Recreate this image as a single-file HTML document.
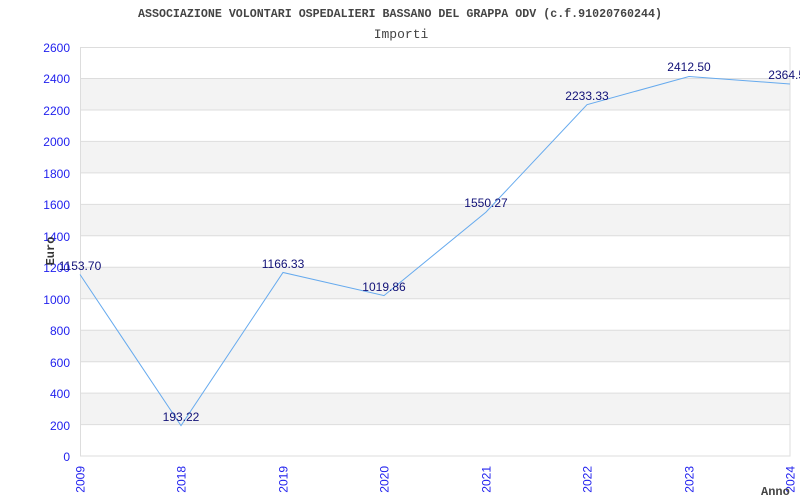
<!DOCTYPE html>
<html><head><meta charset="utf-8"><style>body{margin:0;background:#fff}svg{display:block}</style></head>
<body>
<svg width="800" height="500" xmlns="http://www.w3.org/2000/svg" font-family="Liberation Sans, sans-serif">
<rect width="800" height="500" fill="#fff"/>
<g fill="#f3f3f3">
<rect x="80" y="78.5" width="710" height="31.5"/>
<rect x="80" y="141.4" width="710" height="31.5"/>
<rect x="80" y="204.4" width="710" height="31.5"/>
<rect x="80" y="267.3" width="710" height="31.5"/>
<rect x="80" y="330.2" width="710" height="31.5"/>
<rect x="80" y="393.1" width="710" height="31.5"/>
</g>
<g stroke="#dddddd" stroke-width="1">
<line x1="80" x2="790" y1="78.5" y2="78.5"/><line x1="80" x2="790" y1="110" y2="110"/>
<line x1="80" x2="790" y1="141.4" y2="141.4"/><line x1="80" x2="790" y1="172.9" y2="172.9"/>
<line x1="80" x2="790" y1="204.4" y2="204.4"/><line x1="80" x2="790" y1="235.8" y2="235.8"/>
<line x1="80" x2="790" y1="267.3" y2="267.3"/><line x1="80" x2="790" y1="298.8" y2="298.8"/>
<line x1="80" x2="790" y1="330.2" y2="330.2"/><line x1="80" x2="790" y1="361.7" y2="361.7"/>
<line x1="80" x2="790" y1="393.1" y2="393.1"/><line x1="80" x2="790" y1="424.6" y2="424.6"/>
<rect x="80.5" y="47.5" width="709.5" height="408.5" fill="none"/>
</g>
<g fill="#2222ee" font-size="12" text-anchor="end">
<text x="70" y="52">2600</text><text x="70" y="83">2400</text><text x="70" y="115">2200</text>
<text x="70" y="146">2000</text><text x="70" y="178">1800</text><text x="70" y="209">1600</text>
<text x="70" y="241">1400</text><text x="70" y="272">1200</text><text x="70" y="304">1000</text>
<text x="70" y="335">800</text><text x="70" y="367">600</text><text x="70" y="398">400</text>
<text x="70" y="430">200</text><text x="70" y="461">0</text>
</g>
<g fill="#2222ee" font-size="12" text-anchor="end">
<text transform="translate(84.5,466) rotate(-90)">2009</text>
<text transform="translate(185.5,466) rotate(-90)">2018</text>
<text transform="translate(287.5,466) rotate(-90)">2019</text>
<text transform="translate(388.5,466) rotate(-90)">2020</text>
<text transform="translate(490.5,466) rotate(-90)">2021</text>
<text transform="translate(591.5,466) rotate(-90)">2022</text>
<text transform="translate(693.5,466) rotate(-90)">2023</text>
<text transform="translate(794.5,466) rotate(-90)">2024</text>
</g>
<polyline fill="none" stroke="#66aaee" stroke-width="1" points="80,274.5 181,425.6 283,272.5 384,295.6 486,212.1 587,104.7 689,76.5 790,84"/>
<g fill="#111177" font-size="12" text-anchor="middle">
<text x="80" y="270">1153.70</text><text x="181" y="421">193.22</text>
<text x="283" y="268">1166.33</text><text x="384" y="291">1019.86</text>
<text x="486" y="207">1550.27</text><text x="587" y="100">2233.33</text>
<text x="689" y="71">2412.50</text><text x="790" y="79">2364.50</text>
</g>
<g font-family="Liberation Mono, monospace" fill="#444">
<text x="138" y="17" font-size="12" font-weight="bold" textLength="524" lengthAdjust="spacingAndGlyphs">ASSOCIAZIONE VOLONTARI OSPEDALIERI BASSANO DEL GRAPPA ODV (c.f.91020760244)</text>
<text x="401" y="38" font-size="13" text-anchor="middle">Importi</text>
<text transform="translate(54,251) rotate(-90)" font-size="12" font-weight="bold" fill="#333" text-anchor="middle">Euro</text>
<text x="761" y="495" font-size="12" font-weight="bold">Anno</text>
</g>
</svg>
</body></html>
